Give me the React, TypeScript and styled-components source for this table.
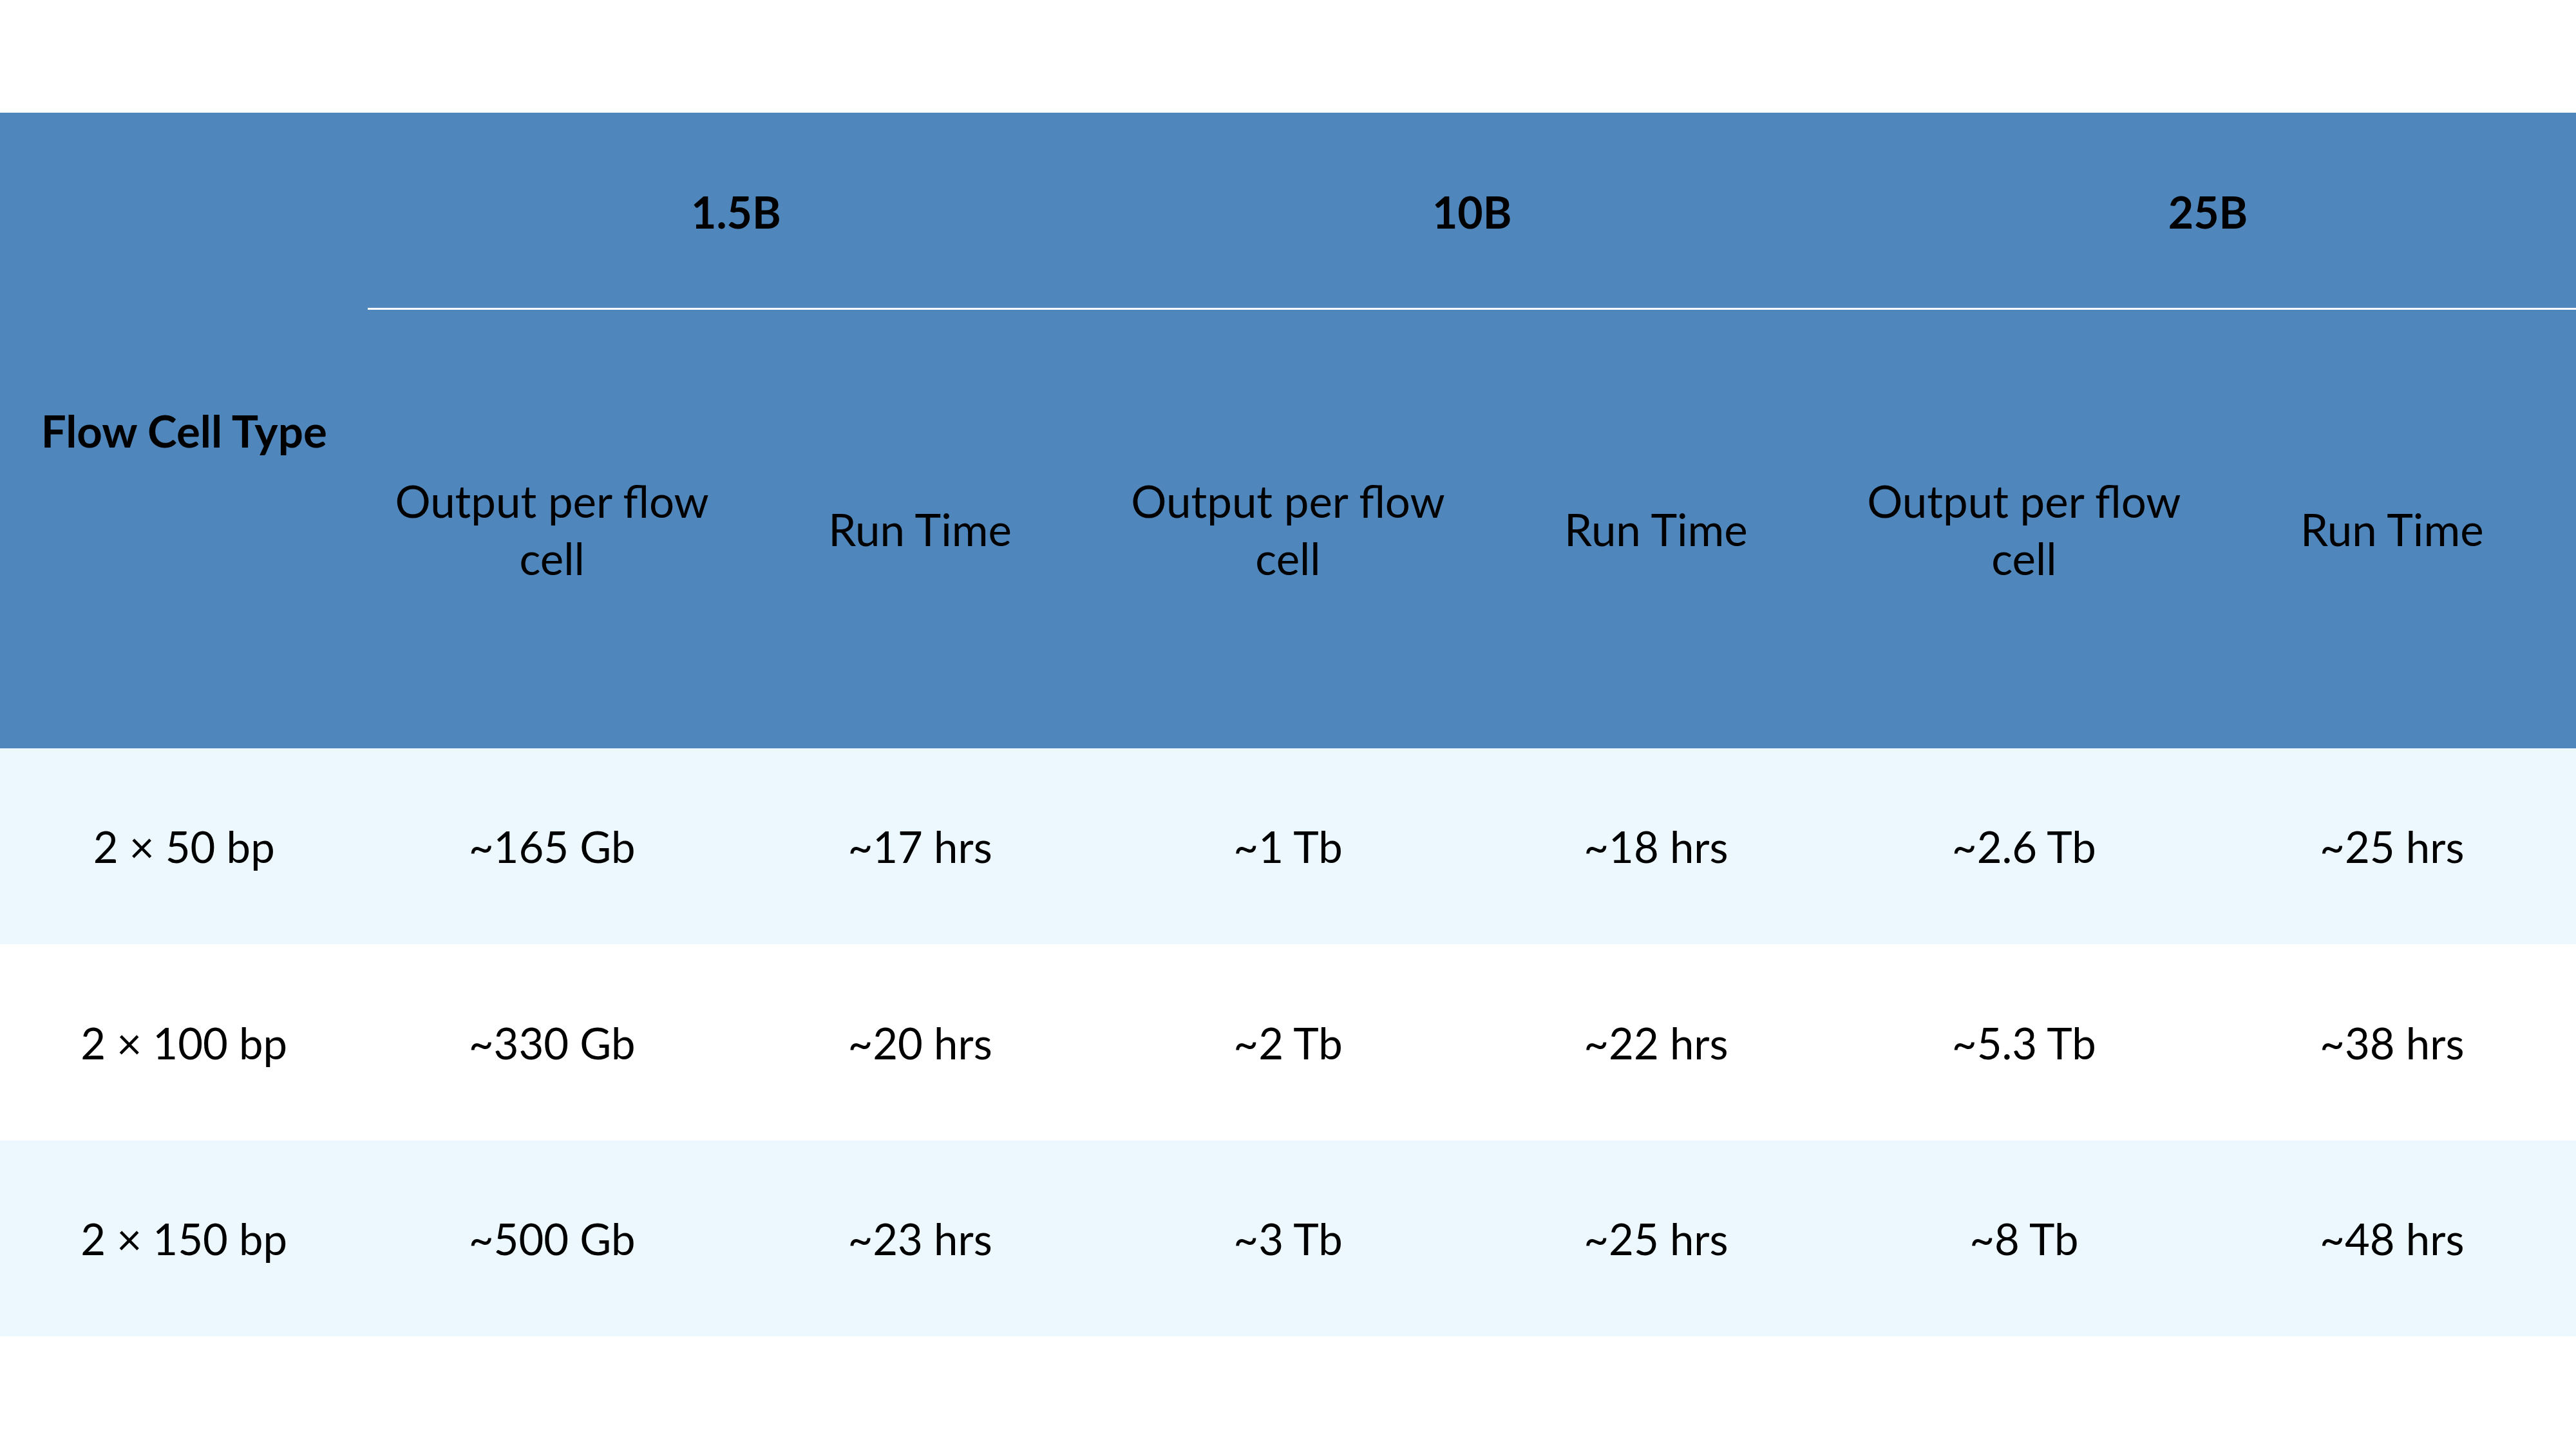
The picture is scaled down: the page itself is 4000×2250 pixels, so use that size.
import React from "react";
import styled, { createGlobalStyle } from "styled-components";

const Global = createGlobalStyle`
  html, body {
    margin: 0;
    padding: 0;
    background: #ffffff;
  }
  body {
    font-family: Lato, "Open Sans", "Liberation Sans", sans-serif;
    color: #000000;
  }
`;

const Page = styled.div`
  width: 4000px;
  height: 2250px;
  padding-top: 175px;
  box-sizing: border-box;
  background: #ffffff;
`;

const Header = styled.div`
  display: grid;
  grid-template-columns: repeat(7, 1fr);
  grid-template-rows: 306px 681px;
  background: #4f86bb;
`;

const Corner = styled.div`
  grid-row: span 2;
  display: flex;
  align-items: center;
  justify-content: center;
  font-weight: 700;
  font-size: 69px;
  text-align: center;
`;

const GroupHead = styled.div`
  grid-column: span 2;
  display: flex;
  align-items: center;
  justify-content: center;
  font-weight: 700;
  font-size: 68px;
  border-bottom: 3px solid #ffffff;
  padding-top: 4px;
  box-sizing: border-box;
`;

const SubHead = styled.div`
  display: flex;
  flex-direction: column;
  align-items: center;
  justify-content: center;
  text-align: center;
  font-size: 69px;
  line-height: 89px;
  white-space: nowrap;
`;

const Row = styled.div<{ $shaded: boolean }>`
  display: grid;
  grid-template-columns: repeat(7, 1fr);
  height: 304.4px;
  background: ${(p) => (p.$shaded ? "#ecf7fe" : "#ffffff")};
`;

const Cell = styled.div`
  display: flex;
  align-items: center;
  justify-content: center;
  font-size: 67px;
  white-space: nowrap;
`;

const groups = ["1.5B", "10B", "25B"];

const rows: string[][] = [
  ["2 × 50 bp", "~165 Gb", "~17 hrs", "~1 Tb", "~18 hrs", "~2.6 Tb", "~25 hrs"],
  ["2 × 100 bp", "~330 Gb", "~20 hrs", "~2 Tb", "~22 hrs", "~5.3 Tb", "~38 hrs"],
  ["2 × 150 bp", "~500 Gb", "~23 hrs", "~3 Tb", "~25 hrs", "~8 Tb", "~48 hrs"],
];

export default function App() {
  return (
    <>
      <Global />
      <Page>
        <Header>
          <Corner>Flow Cell Type</Corner>
          {groups.map((g) => (
            <GroupHead key={g}>{g}</GroupHead>
          ))}
          {groups.map((g) => (
            <React.Fragment key={g}>
              <SubHead>
                <span>Output per flow</span>
                <span>cell</span>
              </SubHead>
              <SubHead>Run Time</SubHead>
            </React.Fragment>
          ))}
        </Header>
        {rows.map((r, i) => (
          <Row key={i} $shaded={i % 2 === 0}>
            {r.map((c, j) => (
              <Cell key={j}>{c}</Cell>
            ))}
          </Row>
        ))}
      </Page>
    </>
  );
}
